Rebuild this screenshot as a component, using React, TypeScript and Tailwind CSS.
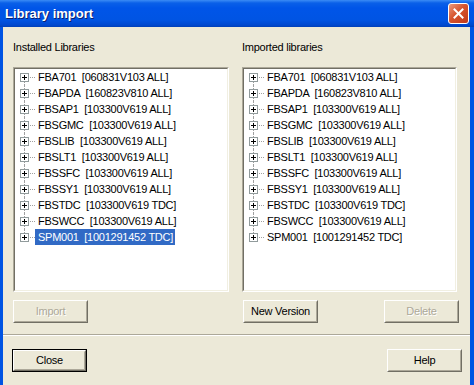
import React from "react";

const items: [string, string][] = [
  ["FBA701", "060831V103 ALL"],
  ["FBAPDA", "160823V810 ALL"],
  ["FBSAP1", "103300V619 ALL"],
  ["FBSGMC", "103300V619 ALL"],
  ["FBSLIB", "103300V619 ALL"],
  ["FBSLT1", "103300V619 ALL"],
  ["FBSSFC", "103300V619 ALL"],
  ["FBSSY1", "103300V619 ALL"],
  ["FBSTDC", "103300V619 TDC"],
  ["FBSWCC", "103300V619 ALL"],
  ["SPM001", "1001291452 TDC"],
];

function Tree({ selected }: { selected?: number }) {
  const last = items.length - 1;
  return (
    <div className="h-[225px] border border-t-[#aca899] border-l-[#aca899] border-b-white border-r-white">
      <div className="h-full border border-t-[#716f64] border-l-[#716f64] border-b-[#f1efe2] border-r-[#f1efe2] bg-white">
        {items.map(([name, ver], i) => (
          <div key={name} className="relative flex h-[16px] items-center">
            <span
              className={
                "absolute left-[9px] w-0 border-l border-dotted border-[#a0a0a0] " +
                (i === 0 ? "top-[8px] bottom-0" : i === last ? "top-0 h-[8px]" : "top-0 bottom-0")
              }
            />
            <span className="relative z-10 ml-[5px] h-[9px] w-[9px] border border-[#919b9c] bg-white">
              <svg width="7" height="7" className="block" shapeRendering="crispEdges">
                <rect x="1" y="3" width="5" height="1" fill="#000" />
                <rect x="3" y="1" width="1" height="5" fill="#000" />
              </svg>
            </span>
            <span className="ml-[1px] w-[5px] border-t border-dotted border-[#a0a0a0]" />
            <span
              className={
                "whitespace-pre pl-[3px] pr-[2px] leading-[16px] " +
                (selected === i ? "bg-[#316ac5] text-white" : "text-black")
              }
            >
              {`${name}  [${ver}]`}
            </span>
          </div>
        ))}
      </div>
    </div>
  );
}

function Btn({ label, disabled, isDefault }: { label: string; disabled?: boolean; isDefault?: boolean }) {
  const inner = (
    <div className="h-full border border-t-white border-l-white border-b-[#716f64] border-r-[#716f64]">
      <div
        className={
          "flex h-full items-center justify-center border border-t-[#ece9d8] border-l-[#ece9d8] border-b-[#aca899] border-r-[#aca899] " +
          (disabled ? "text-[#aca899] [text-shadow:1px_1px_0_#fff]" : "text-black")
        }
      >
        {label}
      </div>
    </div>
  );
  return (
    <div className={"h-[23px] w-[75px] bg-[#ece9d8] " + (isDefault ? "border border-black" : "")}>{inner}</div>
  );
}

export default function App() {
  return (
    <div
      className="flex h-[385px] w-[474px] flex-col overflow-hidden bg-[#0054e3] text-[11px] tracking-[-0.25px]"
      style={{ fontFamily: '"Liberation Sans", Arial, sans-serif' }}
    >
      <div className="flex h-[27px] shrink-0 items-center justify-between bg-[linear-gradient(to_bottom,#3b8cf5_0px,#0a60e8_3px,#0055e8_8px,#0054e3_20px,#0048cf_25px,#003fb8_27px)] pl-[5px] pr-[5px]">
        <span className="text-[13px] font-bold tracking-normal text-white leading-[27px] [text-shadow:1px_1px_0_#0a1f6e]">
          Library import
        </span>
        <div className="flex h-[21px] w-[21px] items-center justify-center rounded-[3px] border border-white bg-[linear-gradient(to_bottom_right,#eb9a7e,#d6542e_45%,#c1391a)]">
          <svg width="11" height="11" viewBox="0 0 11 11">
            <path d="M1.5 1.5L9.5 9.5M9.5 1.5L1.5 9.5" stroke="#fff" strokeWidth="2" strokeLinecap="square" />
          </svg>
        </div>
      </div>
      <div className="ml-[3px] mr-[4px] flex flex-1 flex-col bg-[#ece9d8]">
        <div className="grid grid-cols-[216px_215px] gap-x-[13px] pl-[10px] pt-[14px]">
          <div>
            <div className="mb-[13px] h-[13px] leading-[13px] text-black">Installed Libraries</div>
            <Tree selected={10} />
            <div className="mt-[8px]">
              <Btn label="Import" disabled />
            </div>
          </div>
          <div>
            <div className="mb-[13px] h-[13px] leading-[13px] text-black">Imported libraries</div>
            <Tree />
            <div className="mt-[8px] flex justify-between pl-[1px] pr-[0px]">
              <Btn label="New Version" />
              <div className="-mr-[2px]">
                <Btn label="Delete" disabled />
              </div>
            </div>
          </div>
        </div>
        <div className="mt-[11px] h-[2px] border-t border-t-[#aca899] border-b border-b-white" />
        <div className="mt-[13px] flex justify-between pl-[9px] pr-[8px]">
          <Btn label="Close" isDefault />
          <Btn label="Help" />
        </div>
      </div>
    </div>
  );
}
